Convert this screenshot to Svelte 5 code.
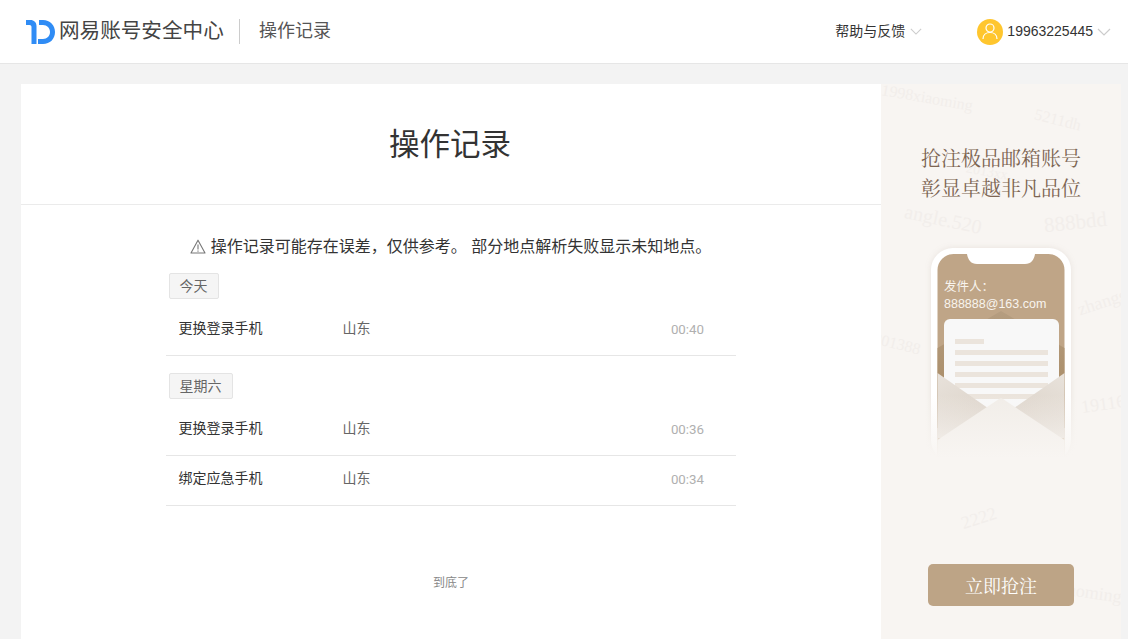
<script>
  const groups = [
    { day: '今天', rows: [{ action: '更换登录手机', place: '山东', time: '00:40' }] },
    {
      day: '星期六',
      rows: [
        { action: '更换登录手机', place: '山东', time: '00:36' },
        { action: '绑定应急手机', place: '山东', time: '00:34' }
      ]
    }
  ]
  // faint account names scattered behind the ad
  const marks = [
    { text: '1998xiaoming', x: 0, y: 5, size: 16, rot: 10 },
    { text: '5211dh', x: 153, y: 27, size: 16, rot: 14 },
    { text: '2013xx', x: 85, y: 80, size: 14, rot: 10 },
    { text: 'angle.520', x: 23, y: 124, size: 20, rot: 12 },
    { text: '888bdd', x: 163, y: 126, size: 21, rot: -6 },
    { text: '201388', x: -8, y: 251, size: 16, rot: 14 },
    { text: 'zhangs', x: 196, y: 208, size: 18, rot: -18 },
    { text: '19116', x: 200, y: 310, size: 18, rot: -8 },
    { text: '2222', x: 80, y: 424, size: 18, rot: -18 },
    { text: 'xiaoming', x: 173, y: 498, size: 18, rot: 8 }
  ]
</script>

<div class="page">
  <header>
    <div class="brand">
      <svg class="logo" width="30" height="26" viewBox="0 0 30 26">
        <path d="M0 1h4.500c3.500 0 6 2.500 6 6v18H5.500V8c0-1.300-.8-2-2-2H0z" fill="#2f8cf5" />
        <path d="M13 1h4c7 0 12 5 12 12s-5 12-12 12h-5v-5h5c4 0 7-3 7-7s-3-7-7-7h-4z" fill="#2f8cf5" />
      </svg>
      <span class="brand-name">网易账号安全中心</span>
      <span class="brand-sep"></span>
      <span class="brand-page">操作记录</span>
    </div>
    <div class="help">
      <span>帮助与反馈</span>
      <svg width="12" height="7" viewBox="0 0 14 8"><path d="M1 1l6 6 6-6" fill="none" stroke="#ccc" stroke-width="1.300" /></svg>
    </div>
    <div class="user">
      <span class="avatar">
        <svg width="16" height="17" viewBox="0 0 16 17" fill="none" stroke="#fff" stroke-width="1.200">
          <circle cx="8" cy="5" r="4" />
          <path d="M1 16c0-4 3-6.500 7-6.500s7 2.500 7 6.500" />
        </svg>
      </span>
      <span class="phone">19963225445</span>
      <svg width="14" height="8" viewBox="0 0 14 8"><path d="M1 1l6 6 6-6" fill="none" stroke="#ccc" stroke-width="1.200" /></svg>
    </div>
  </header>

  <div class="body">
    <main>
      <h1>操作记录</h1>
      <div class="content">
        <p class="notice">
          <svg width="16" height="15" viewBox="0 0 16 15" fill="none" stroke="#777" stroke-width="1.100">
            <path d="M8 1.200L15 14H1z" stroke-linejoin="round" />
            <path d="M8 5.500v5M8 11.500v1.200" />
          </svg>
          <span>操作记录可能存在误差，仅供参考。 部分地点解析失败显示未知地点。</span>
        </p>
        <div class="list">
          {#each groups as group}
            <section>
              <span class="tag">{group.day}</span>
              {#each group.rows as row}
                <div class="row">
                  <span class="action">{row.action}</span>
                  <span class="place">{row.place}</span>
                  <span class="time">{row.time}</span>
                </div>
              {/each}
            </section>
          {/each}
        </div>
        <p class="end">到底了</p>
      </div>
    </main>

    <aside>
      {#each marks as m}
        <span class="mark" style="left:{m.x}px;top:{m.y}px;font-size:{m.size}px;transform:rotate({m.rot}deg)">{m.text}</span>
      {/each}
      <div class="slogan">
        <div>抢注极品邮箱账号</div>
        <div>彰显卓越非凡品位</div>
      </div>
      <svg class="phone-art" width="140" height="214" viewBox="0 0 140 214">
        <defs>
          <linearGradient id="fade" x1="0" y1="0" x2="0" y2="1">
            <stop offset="0.65" stop-color="#f8f5f2" stop-opacity="0" />
            <stop offset="0.93" stop-color="#f8f5f2" />
          </linearGradient>
          <linearGradient id="flapL" x1="0" y1="0" x2="1" y2="1">
            <stop offset="0" stop-color="#e8e2db" />
            <stop offset="1" stop-color="#d4c9bd" />
          </linearGradient>
          <linearGradient id="flapR" x1="1" y1="0" x2="0" y2="1">
            <stop offset="0" stop-color="#e8e2db" />
            <stop offset="1" stop-color="#d4c9bd" />
          </linearGradient>
          <linearGradient id="back" x1="0" y1="0" x2="0" y2="1">
            <stop offset="0" stop-color="#b59d80" />
            <stop offset="1" stop-color="#a5865e" />
          </linearGradient>
        </defs>
        <rect class="frame" x="0" y="0" width="140" height="214" rx="22" fill="#fff" />
        <path d="M6.500 22a16 16 0 0 1 16-16h95a16 16 0 0 1 16 16v192h-127z" fill="#bfa587" />
        <path d="M36 6h68c-1 6-4 10-10 10H46c-6 0-9-4-10-10z" fill="#fff" />
        <text x="13" y="43" class="art-text">发件人：</text>
        <text x="13" y="60" class="art-text">888888@163.com</text>
        <path d="M6.500 100L70 63l63.500 37v80h-127z" fill="url(#back)" />
        <rect x="13" y="71" width="115" height="110" rx="6" fill="#f8f8f8" />
        <g fill="#ebe4dc">
          <rect x="24" y="91" width="29" height="5" />
          <rect x="24" y="102" width="93" height="5" />
          <rect x="24" y="113" width="93" height="5" />
          <rect x="24" y="124" width="93" height="5" />
          <rect x="24" y="135" width="93" height="5" />
          <rect x="24" y="146" width="93" height="5" />
        </g>
        <path d="M6.500 125L100 190H6.500z" fill="url(#flapL)" />
        <path d="M133.500 125L40 190h93.500z" fill="url(#flapR)" />
        <path d="M6.500 192L68 151c1.500-1 2.500-1 4 0l61.500 41v22h-127z" fill="#f1ede8" />
        <rect x="-8" y="0" width="156" height="226" fill="url(#fade)" />
      </svg>
      <button class="cta">立即抢注</button>
    </aside>
  </div>
</div>

<style>
  :global(body) {
    background: #f3f3f3;
  }
  .page {
    height: 639px;
    overflow: hidden;
    display: flex;
    flex-direction: column;
    font-family: "Liberation Sans", "Noto Sans CJK SC", sans-serif;
    color: #333;
  }
  header {
    height: 64px;
    flex: none;
    box-sizing: border-box;
    background: #fff;
    border-bottom: 1px solid #e6e6e6;
    display: flex;
    align-items: center;
    padding: 0 17px 0 26px;
  }
  .brand {
    flex: 1;
    display: flex;
    align-items: center;
  }
  .logo {
    margin: 0 3px 0 0;
  }
  .brand-name {
    font-size: 20.600px;
    color: #444;
    width: 165px;
    white-space: nowrap;
    padding-bottom: 6px;
  }
  .brand-sep {
    width: 1px;
    height: 25px;
    background: #ccc;
    margin: 0 19px 0 15px;
  }
  .brand-page {
    font-size: 18px;
    color: #555;
    padding-bottom: 5px;
  }
  .help {
    display: flex;
    align-items: center;
    gap: 5px;
    font-size: 14px;
    margin-right: 55px;
  }
  .help span {
    padding-bottom: 3px;
  }
  .user {
    display: flex;
    align-items: center;
    font-size: 14px;
  }
  .avatar {
    width: 26px;
    height: 26px;
    border-radius: 50%;
    background: #ffc62e;
    display: flex;
    align-items: center;
    justify-content: center;
    margin-right: 4px;
  }
  .phone {
    margin-right: 4px;
    padding-bottom: 1px;
  }
  .body {
    flex: 1;
    display: flex;
    padding: 20px 7px 0 21px;
    min-height: 0;
  }
  main {
    width: 860px;
    flex: none;
    background: #fff;
  }
  h1 {
    margin: 0;
    height: 121px;
    box-sizing: border-box;
    padding: 0 2px 5px 0;
    border-bottom: 1px solid #ebebeb;
    display: flex;
    align-items: center;
    justify-content: center;
    font-size: 30.500px;
    font-weight: 400;
    color: #333;
  }
  .content {
    width: 570px;
    margin-left: 145px;
  }
  .notice {
    margin: 30px 0 0;
    height: 24px;
    display: flex;
    align-items: center;
    justify-content: center;
    gap: 4px;
    font-size: 16px;
    line-height: 24px;
    color: #333;
  }
  .notice svg {
    margin: 0 1px 2px -1px;
  }
  .list {
    margin-top: 14px;
  }
  section {
    display: flex;
    flex-direction: column;
    align-items: flex-start;
    margin-bottom: 17px;
  }
  .tag {
    box-sizing: border-box;
    height: 26px;
    margin-left: 3px;
    padding: 0 10px 0 9.500px;
    border: 1px solid #e4e4e4;
    border-radius: 2px;
    background: #f5f5f5;
    font-size: 14px;
    line-height: 24px;
    color: #666;
  }
  .row {
    align-self: stretch;
    height: 50px;
    box-sizing: border-box;
    border-bottom: 1px solid #e6e6e6;
    display: flex;
    align-items: flex-end;
    padding: 0 32px 15px 12.500px;
    font-size: 14px;
    line-height: 20px;
  }
  .tag + .row {
    height: 57px;
  }
  .action {
    width: 164px;
    color: #333;
    margin-bottom: 2px;
  }
  .place {
    flex: 1;
    color: #666;
    margin-bottom: 2px;
  }
  .time {
    font-family: Roboto, sans-serif;
    font-size: 13.300px;
    color: #b0b0b0;
  }
  .end {
    margin: 67px 0 0;
    text-align: center;
    font-size: 12px;
    color: #888;
  }
  aside {
    position: relative;
    flex: 1;
    overflow: hidden;
    background: #f8f5f2;
    display: flex;
    flex-direction: column;
    align-items: center;
    padding-top: 60px;
    box-sizing: border-box;
  }
  .mark {
    position: absolute;
    font-family: "Liberation Serif", serif;
    color: #f2eeeb;
    white-space: nowrap;
  }
  .slogan {
    position: relative;
    font-family: "Liberation Serif", "Noto Serif CJK SC", serif;
    font-size: 20px;
    line-height: 30px;
    color: #7d6552;
    text-align: center;
  }
  .phone-art {
    position: relative;
    margin-top: 44px;
    flex: none;
    overflow: visible;
  }
  .frame {
    filter: drop-shadow(0 0 3px rgba(120, 100, 80, 0.12));
  }
  .art-text {
    font-size: 12.500px;
    fill: #f8f4ee;
  }
  .cta {
    position: relative;
    margin-top: 102px;
    width: 146px;
    height: 42px;
    flex: none;
    border: none;
    border-radius: 5px;
    background: #bda486;
    color: #fff;
    font-family: "Liberation Serif", "Noto Serif CJK SC", serif;
    font-size: 18px;
    padding: 0;
  }
</style>
